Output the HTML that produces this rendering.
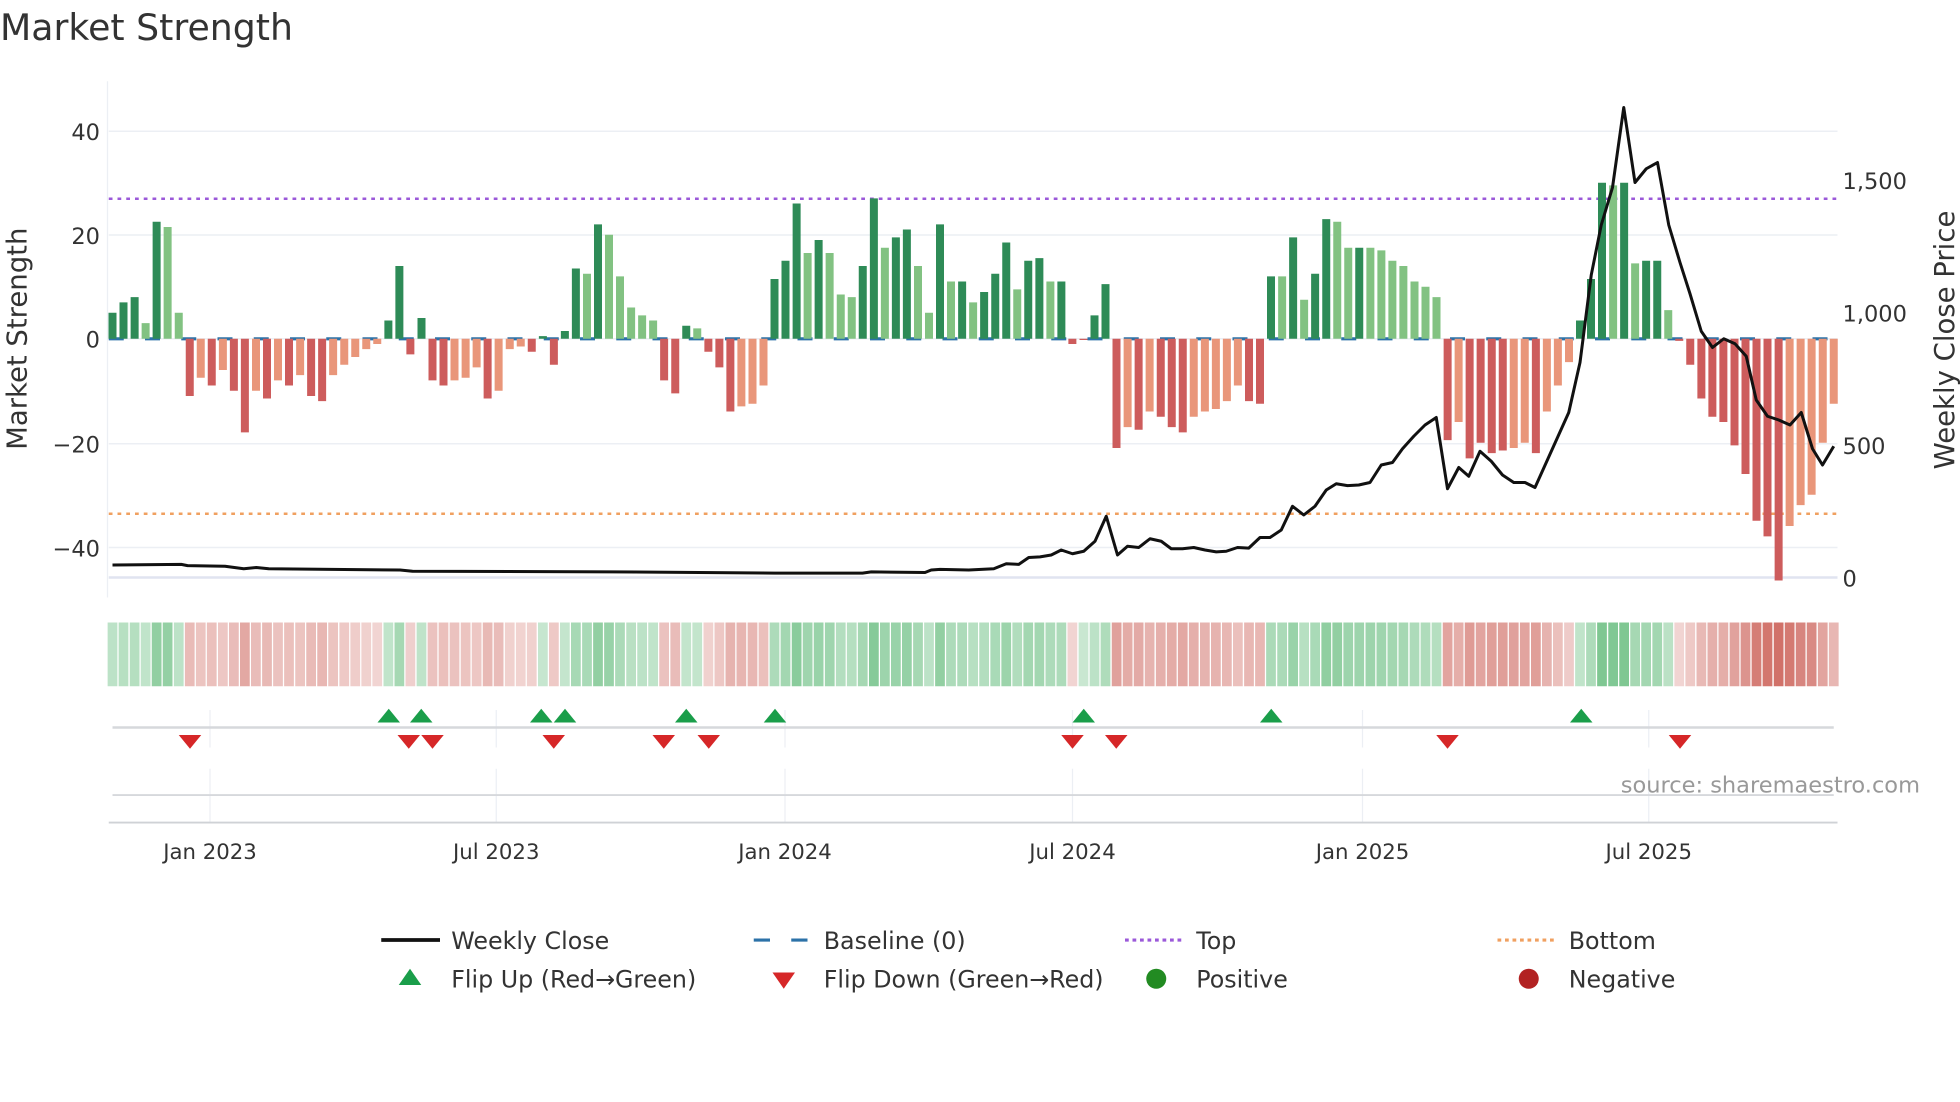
<!DOCTYPE html>
<html><head><meta charset="utf-8">
<style>
html,body{margin:0;padding:0;background:#fff;width:1960px;height:1102px;overflow:hidden}
svg text{font-family:"DejaVu Sans","Liberation Sans",sans-serif}
</style></head>
<body>
<svg id="s" width="1960" height="1102" viewBox="0 0 1568 881.6" xmlns="http://www.w3.org/2000/svg">
<text x="0" y="32" font-size="29" fill="#333">Market Strength</text>
<g stroke="#eceff4" stroke-width="1.2">
<line x1="87" y1="105" x2="1470" y2="105"/><line x1="87" y1="188" x2="1470" y2="188"/>
<line x1="87" y1="271" x2="1470" y2="271"/><line x1="87" y1="355" x2="1470" y2="355"/>
<line x1="87" y1="438" x2="1470" y2="438"/>
</g>
<line x1="87" y1="462" x2="1470" y2="462" stroke="#e0e4f0" stroke-width="2"/>
<line x1="86" y1="65" x2="86" y2="478" stroke="#eceff4" stroke-width="1"/>
<g font-size="18" fill="#333" text-anchor="end">
<text x="80" y="112">40</text><text x="80" y="195">20</text><text x="80" y="278">0</text>
<text x="80" y="362">−20</text><text x="80" y="445">−40</text>
</g>
<g font-size="18" fill="#333">
<text x="1474" y="151">1,500</text><text x="1474" y="257">1,000</text>
<text x="1474" y="363">500</text><text x="1474" y="469">0</text>
</g>
<text transform="translate(21,271) rotate(-90)" font-size="22" fill="#333" text-anchor="middle">Market Strength</text>
<text transform="translate(1563,272) rotate(-90)" font-size="22" fill="#333" text-anchor="middle">Weekly Close Price</text>
<line x1="87" y1="159" x2="1470" y2="159" stroke="#9b59d9" stroke-width="2" stroke-dasharray="3,4"/>
<line x1="87" y1="411" x2="1470" y2="411" stroke="#f0a060" stroke-width="2" stroke-dasharray="3,4"/>
<line x1="87" y1="271" x2="1470" y2="271" stroke="#2c72a8" stroke-width="2.5" stroke-dasharray="12,17"/>
<g id="bars"></g>
<polyline id="price" fill="none" stroke="#111" stroke-width="2.4" stroke-linejoin="round"/>
<g id="heat"></g>
<g stroke="#eceff4" stroke-width="1">
<line x1="168" y1="568" x2="168" y2="598"/><line x1="397" y1="568" x2="397" y2="598"/><line x1="628" y1="568" x2="628" y2="598"/>
<line x1="858" y1="568" x2="858" y2="598"/><line x1="1090" y1="568" x2="1090" y2="598"/><line x1="1319" y1="568" x2="1319" y2="598"/>
<line x1="168" y1="615" x2="168" y2="658"/><line x1="397" y1="615" x2="397" y2="658"/><line x1="628" y1="615" x2="628" y2="658"/>
<line x1="858" y1="615" x2="858" y2="658"/><line x1="1090" y1="615" x2="1090" y2="658"/><line x1="1319" y1="615" x2="1319" y2="658"/>
</g>
<line x1="90" y1="582" x2="1467" y2="582" stroke="#d6d8dc" stroke-width="2"/>
<line x1="90" y1="636" x2="1467" y2="636" stroke="#d6d8dc" stroke-width="1.5"/>
<line x1="87" y1="658" x2="1470" y2="658" stroke="#cfd2d6" stroke-width="1.5"/>
<g id="marks"></g>
<text x="1536" y="634" font-size="18" fill="#999" text-anchor="end">source: sharemaestro.com</text>
<g font-size="17" fill="#333" text-anchor="middle">
<text x="168" y="687">Jan 2023</text><text x="397" y="687">Jul 2023</text><text x="628" y="687">Jan 2024</text>
<text x="858" y="687">Jul 2024</text><text x="1090" y="687">Jan 2025</text><text x="1319" y="687">Jul 2025</text>
</g>
<g font-size="19" fill="#333">
<line x1="305" y1="752" x2="352" y2="752" stroke="#111" stroke-width="3"/>
<text x="361" y="759">Weekly Close</text>
<line x1="603" y1="752" x2="650" y2="752" stroke="#2c72a8" stroke-width="2.5" stroke-dasharray="13,17"/>
<text x="659" y="759">Baseline (0)</text>
<line x1="900" y1="752" x2="945" y2="752" stroke="#9b59d9" stroke-width="2.5" stroke-dasharray="3,3"/>
<text x="957" y="759">Top</text>
<line x1="1198" y1="752" x2="1243" y2="752" stroke="#f0a060" stroke-width="2.5" stroke-dasharray="3,3"/>
<text x="1255" y="759">Bottom</text>
<polygon points="319,788 337,788 328,775" fill="#1a9e4a"/>
<text x="361" y="790">Flip Up (Red→Green)</text>
<polygon points="618,778 636,778 627,791" fill="#d62728"/>
<text x="659" y="790">Flip Down (Green→Red)</text>
<circle cx="925" cy="783" r="8" fill="#228b22"/>
<text x="957" y="790">Positive</text>
<circle cx="1223" cy="783" r="8" fill="#b22222"/>
<text x="1255" y="790">Negative</text>
</g>
</svg>
<script>
var NS='http://www.w3.org/2000/svg';
function el(parent,tag,attrs){var e=document.createElementNS(NS,tag);for(var k in attrs)e.setAttribute(k,attrs[k]);parent.appendChild(e);return e;}
var B=[[5,'d'],[7,'d'],[8,'d'],[3,'l'],[22.5,'d'],[21.5,'l'],[5,'l'],[-11,'r'],[-7.5,'s'],[-9,'r'],[-6,'s'],[-10,'r'],[-18,'r'],[-10,'s'],[-11.5,'r'],[-8,'s'],[-9,'r'],[-7,'s'],[-11,'r'],[-12,'r'],[-7,'s'],[-5,'s'],[-3.5,'s'],[-2,'s'],[-1,'s'],[3.5,'d'],[14,'d'],[-3,'r'],[4,'d'],[-8,'r'],[-9,'r'],[-8,'s'],[-7.5,'s'],[-5.5,'s'],[-11.5,'r'],[-10,'s'],[-2,'s'],[-1.5,'s'],[-2.5,'r'],[0.5,'d'],[-5,'r'],[1.5,'d'],[13.5,'d'],[12.5,'l'],[22,'d'],[20,'l'],[12,'l'],[6,'l'],[4.5,'l'],[3.5,'l'],[-8,'r'],[-10.5,'r'],[2.5,'d'],[2,'l'],[-2.5,'r'],[-5.5,'r'],[-14,'r'],[-13,'s'],[-12.5,'s'],[-9,'s'],[11.5,'d'],[15,'d'],[26,'d'],[16.5,'l'],[19,'d'],[16.5,'l'],[8.5,'l'],[8,'l'],[14,'d'],[27,'d'],[17.5,'l'],[19.5,'d'],[21,'d'],[14,'l'],[5,'l'],[22,'d'],[11,'l'],[11,'d'],[7,'l'],[9,'d'],[12.5,'d'],[18.5,'d'],[9.5,'l'],[15,'d'],[15.5,'d'],[11,'l'],[11,'d'],[-1,'r'],[0,'r'],[4.5,'d'],[10.5,'d'],[-21,'r'],[-17,'s'],[-17.5,'r'],[-14,'s'],[-15,'r'],[-17,'r'],[-18,'r'],[-15,'s'],[-14,'s'],[-13.5,'s'],[-12,'s'],[-9,'s'],[-12,'r'],[-12.5,'r'],[12,'d'],[12,'l'],[19.5,'d'],[7.5,'l'],[12.5,'d'],[23,'d'],[22.5,'l'],[17.5,'l'],[17.5,'d'],[17.5,'l'],[17,'l'],[15,'l'],[14,'l'],[11,'l'],[10,'l'],[8,'l'],[-19.5,'r'],[-16,'s'],[-23,'r'],[-20,'r'],[-22,'r'],[-21.5,'r'],[-21,'s'],[-20,'s'],[-22,'r'],[-14,'s'],[-9,'s'],[-4.5,'s'],[3.5,'d'],[11.5,'d'],[30,'d'],[29.5,'l'],[30,'d'],[14.5,'l'],[15,'d'],[15,'d'],[5.5,'l'],[-0.4,'r'],[-5,'r'],[-11.5,'r'],[-15,'r'],[-16,'r'],[-20.5,'r'],[-26,'r'],[-35,'r'],[-38,'r'],[-46.5,'r'],[-36,'s'],[-32,'s'],[-30,'s'],[-20,'s'],[-12.5,'s']];
var C={d:'#2e8b57',l:'#82c282',r:'#cd5c5c',s:'#e9967a'};
var n=B.length,step=(1467-90)/(n-1);
var gb=document.getElementById('bars'),gh=document.getElementById('heat');
for(var i=0;i<n;i++){var x=90+i*step,v=B[i][0],y=271-4.16*Math.max(v,0),hh=Math.max(Math.abs(v)*4.16,1);
el(gb,'rect',{x:(x-3.2).toFixed(1),y:(v>=0?y:271).toFixed(1),width:6.4,height:hh.toFixed(1),fill:C[B[i][1]]});
var a=Math.min(Math.abs(v)/40,1),col;
if(v>=0){a=0.28+0.5*a;col='rgba(60,170,90,'+a.toFixed(2)+')';}else{a=0.22+0.55*a;col='rgba(195,70,60,'+a.toFixed(2)+')';}
el(gh,'rect',{x:(x-4.4+0.5).toFixed(1),y:498,width:(step-1).toFixed(1),height:51,fill:col});}
var P=[90,452,145,451.5,150,452.5,180,453,195,455,205,454,215,455,320,456,330,457,490,457.5,620,458.5,690,458.5,697,457.5,740,458,745,456,752,455.5,775,456,795,455,805,451,815,451.5,823,446,832,445.5,841,444,849,440,858,443,867,441,876,433,885,413,894,444,902,437,911,438,920,431,929,433,937,439,946,439,955,438,964,440,973,441.5,981,441,990,438,999,438.5,1008,430,1016,430,1025,424,1034,405,1043,412,1052,405,1061,392,1069,387,1078,388.5,1087,388,1096,386,1105,372,1114,370,1122,359,1131,349,1140,340,1149,334,1158,391,1167,374,1175,381,1184,361,1193,369,1202,380,1211,386,1220,386,1228,390,1237,370,1246,350,1255,330,1264,290,1273,220,1281,180,1290,150,1299,86,1308,146,1317,135,1326,130,1335,180,1344,210,1352,235,1361,265,1370,278,1379,271,1388,275,1397,285,1405,320,1414,333,1423,336,1432,340,1441,330,1450,359,1458,372,1467,357];
var ps='';for(var j=0;j<P.length;j+=2)ps+=P[j]+','+P[j+1]+' ';document.getElementById('price').setAttribute('points',ps);
var U=[311,337,433,452,549,620,867,1017,1265],D=[152,327,346,443,531,567,858,893,1158,1344],gm=document.getElementById('marks');
U.forEach(function(x){el(gm,'polygon',{points:(x-9)+',578 '+(x+9)+',578 '+x+',567',fill:'#1a9e4a'});});
D.forEach(function(x){el(gm,'polygon',{points:(x-9)+',588 '+(x+9)+',588 '+x+',599',fill:'#d62728'});});
</script>
</body></html>
